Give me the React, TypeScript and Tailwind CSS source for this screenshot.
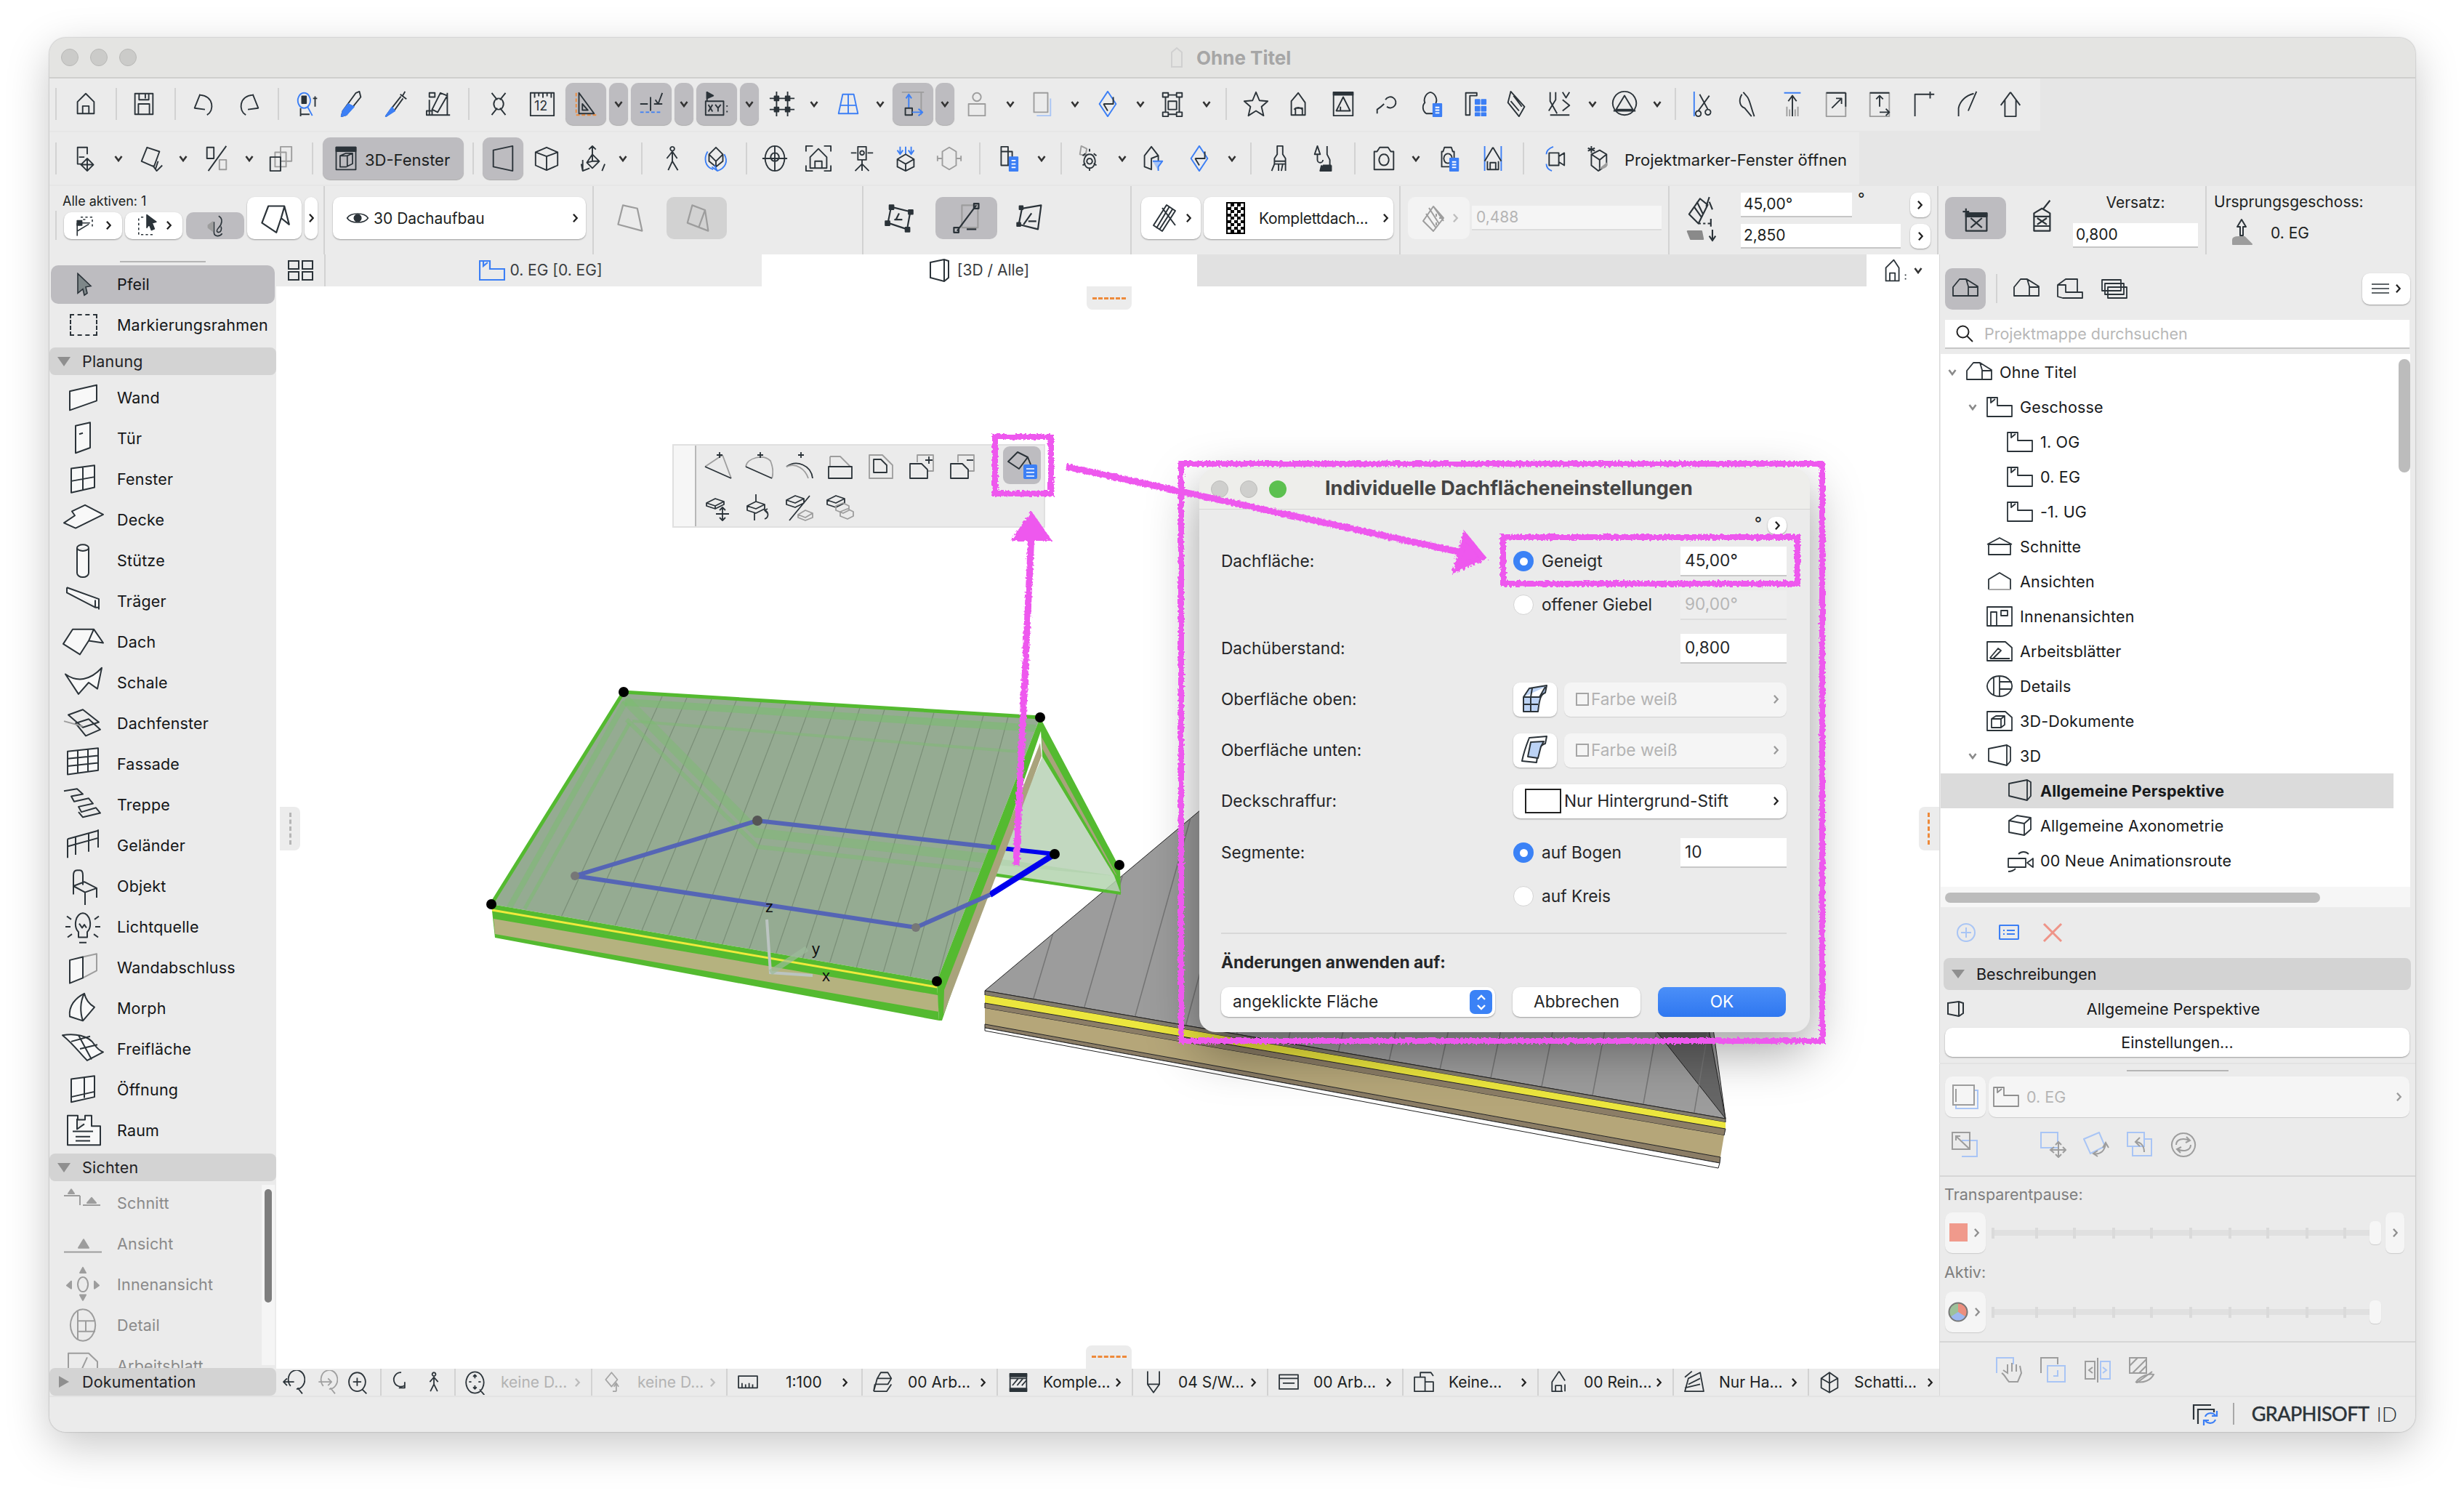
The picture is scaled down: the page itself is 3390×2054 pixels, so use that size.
import React from "react";

const D = "#2b3339";
const B = "#3c7ff5";
const G = "#9d9d9d";
const L = "#a9c5f5";
const O = "#ee8a3a";
const R = "#ef9488";

type Part = { d: string; c: string; f: string };
const s = (d: string, c = D, f = "none"): Part => ({ d, c, f });

const ICONS: Record<string, Part[]> = {
  home: [s("M20 5L8 17V34H32V17ZM15.5 34V23H24.5V34")],
  save: [s("M7 5H33V35H7ZM13 5V14H27V5M12 35V20H28V35M22 6V12")],
  undo: [s("M14 6L6 26L21 28M14 7C34 9 35 30 24 36")],
  redo: [s("M26 6L34 26L19 28M26 7C6 9 5 30 16 36")],
  find: [s("M14 4a9 11 0 1 0 .1 0M19 24L26 37", B), s("M11 9h6v10h-6z", D, D), s("M30 9V24M27 12h6M9 26V38M9 35H22")],
  pick: [s("M31 2L26 4L7 30L5 38L12 36L33 10Z"), s("M15 20L7 30L5 38L12 36L23 24Z", B, B)],
  inject: [s("M34 2L30 9M27 6L36 13M28 9L14 27L6 38M31 12L18 30L6 38"), s("M15 25L6 38L19 30Z", B, B)],
  param: [s("M6 4H14V10H6ZM22 4L32 8L18 32L10 28ZM32 4V36M28 36H36M6 14V36M2 36H32M2 30h8v6H2z")],
  cross: [s("M10 4L18 14M30 4L22 14M10 36L18 26M30 36L22 26M20 12a7 8 0 1 0 .1 0")],
  ruler: [s("M3 4H37V37H3ZM9 4V11M15 4V9M21 4V11M27 4V9M33 4V11")],
  guide: [s("M6 4v5M6 12v5M6 20v5M6 28v5M6 36h5M14 36h5M22 36h5M30 36h5", O), s("M10 4L32 34H10ZM15 20V29H23Z")],
  snap: [s("M4 20H15M19 10V30M24 20H36M26 14L30 20L36 4"), s("M4 32h5M12 32h5M20 32h5M28 32h5", B)],
  xy: [s("M6 2V16"), s("M6 3L15 8L6 12Z", D, D), s("M4 16H30V36H4ZM8 21l6 10M14 21l-6 10M18 21l4 5l4-5M22 26v5M35 22v2M35 30v2")],
  grid: [s("M12 2V38M28 2V38M2 12H38M2 28H38"), s("M9 9h6v6h-6zM25 9h6v6h-6zM9 25h6v6h-6zM25 25h6v6h-6z", D, D)],
  trap: [s("M12 6H28L34 34H6ZM20 6V34M8 22H32", B)],
  wallarrow: [s("M4 3H36M32 3V36", G), s("M14 26V6M10 12L14 6L18 12", B), s("M9 26h10v10H9z"), s("M19 32H34M28 27L34 32L28 37", B)],
  lock: [s("M14 10a6 6 0 1 1 12 0a6 6 0 1 1-12 0M8 20H32V37H8Z", G)],
  boxg: [s("M10 4H30V32H10Z", G), s("M14 37H34V12", L)],
  diam: [s("M20 2L8 20L20 38L32 20Z", B), s("M14 20H28V10M14 20L20 30")],
  group: [s("M6 4H14V10H6ZM26 4H34V10H26ZM6 32H14V38H6ZM26 32H34V38H26ZM10 10V32M30 10V32M14 7H26M14 35H26M14 16H26V28H14Z")],
  star: [s("M20 3L25 15L37 16L28 24L31 37L20 30L9 37L12 24L3 16L15 15Z")],
  fillh: [s("M18 4L8 16V36H28V18L18 4ZM14 36V26H24V36M12 28a8 8 0 0 1 12 0")],
  page: [s("M6 3H34V37H6Z"), s("M6 3H34V7H6Z", D, D), s("M20 10L10 30H30ZM16 30V24")],
  curve: [s("M6 34V28Q12 24 16 20M18 14a8 8 0 1 1 2 10")],
  layerpg: [s("M20 3C12 5 10 14 12 18C8 22 8 30 14 34H24M20 3C28 5 30 14 28 18V20"), s("M24 20h12v18H24z", B, B), s("M27 25h6M27 29h6M27 33h6", "#fff")],
  multi: [s("M8 4H24V8H14V36H8Z"), s("M22 14h6v6h-6zM31 14h6v6h-6zM22 24h6v6h-6zM31 24h6v6h-6zM22 33h6v4h-6zM31 33h6v4h-6z", B, B)],
  tag: [s("M10 2L30 24L22 38L6 18ZM14 8L26 24M10 16L22 30")],
  dim: [s("M6 3V16L16 34M14 3V14L4 30M24 3l5 8 5-8M24 14l10 8-10 8M6 36H34", D)],
  circ: [s("M20 2a17 17 0 1 0 .1 0M20 8L8 28H32ZM4 30H36")],
  scissor: [s("M4 2V38", B), s("M10 30a4 4 0 1 0 .1 0M24 28a4 4 0 1 0 .1 0M12 6L24 28M26 8L10 30")],
  split: [s("M10 6C4 16 8 24 14 26L24 38M12 3L18 10C22 16 22 22 28 38")],
  up: [s("M8 4H32", B), s("M20 38V10M14 16L20 8L26 16"), s("M12 38V24M16 38V28M24 38V28M28 38V24", G)],
  resz: [s("M6 4H34V38H6Z", G), s("M6 4H34M34 4V24M14 26L28 12M20 12H28V20")],
  resz2: [s("M6 4H34V38H6Z", G), s("M6 4H34M20 24V8M15 13L20 8L25 13M20 32H34M29 27L34 32L29 37")],
  corner: [s("M8 38V6H30M8 6H36M30 2V12")],
  arcv: [s("M8 38V26C10 16 18 8 30 5M34 2L22 30M8 34V30")],
  gable: [s("M20 3L6 22M20 3L34 22M12 14V38H28V14")],
  move: [s("M20 14V4H6V28H12M16 18L8 18M20 20V38M14 26L20 20L26 26M14 32L20 38L26 32M11 29H29M14 26L11 29L14 32M26 26L29 29L26 32")],
  rot: [s("M14 4L32 10L24 32L6 24ZM30 24L26 36M22 30L28 38L36 30")],
  mirror: [s("M34 2L8 38"), s("M6 4H16V20H6Z"), s("M24 22H34V36H24Z", G)],
  mult: [s("M20 3H36V24H20Z", G), s("M12 11H28V32H12Z", G), s("M5 18H20V38H5Z")],
  w3d: [s("M5 3H35V37H5Z"), s("M5 3H35V9H5Z", D, D), s("M11 16L20 12H30V28L20 33H11ZM11 16H22V33M22 16L30 12")],
  persp: [s("M6 8L34 2V38L6 32Z M34 2V38")],
  axo: [s("M4 11L20 4L36 11V30L20 37L4 30ZM4 11L20 17L36 11M20 17V37")],
  walkm: [s("M20 2V14M15 7L20 2L25 7M12 26L20 14L30 24L20 34ZM20 14V24L30 24M12 26L20 24M6 38V22M4 28L6 38L16 34M34 38L38 28")],
  walker: [s("M20 3a3 3 0 1 0 .1 0M20 10V24L14 37M20 24L28 37M12 20L20 10L27 20")],
  orbit: [s("M20 4L10 14L20 24L30 14ZM10 14V24L20 32L30 24V14M20 24V32"), s("M8 10C2 20 4 32 16 36M32 14C38 24 34 34 22 38M14 32L22 38L18 30", B)],
  target: [s("M20 2a14 18 0 1 0 .1 0M20 12a6 6 0 1 0 .1 0M2 20H38M20 2V38")],
  frame: [s("M2 10V2H12M28 2H38V10M2 30V38H12M28 38H38V30M20 6L8 18V34H32V18ZM15 34V24H25V34")],
  tripod: [s("M14 3H26V22H14ZM20 9a3 3 0 1 0 .1 0M4 12H12M28 12H36M20 22V28L10 38M20 28L30 38M20 28V38")],
  compress: [s("M12 3V14M28 3V14M20 3V14M8 8L12 14L16 8M24 8L28 14L32 8", B), s("M20 14L8 21V32L20 38L32 32V21ZM8 21L20 28L32 21M20 28V38")],
  gem: [s("M20 4L10 10V30L20 36L30 30V10ZM2 20H10M30 20H38M3 16V24M37 16V24", G)],
  layerbox: [s("M12 3H22V10H28V30H12ZM12 10H22V30"), s("M24 18h12v20H24z", B, B), s("M27 23h6M27 28h6M27 33h6", "#fff")],
  gear: [s("M8 2L16 6L14 16L6 14Z", G), s("M20 14a8 10 0 1 0 .1 0M20 20a4 4 0 1 0 .1 0M14 13L10 16M26 13L30 16M14 27L10 30M26 27L30 30M20 10V6M20 34V38")],
  funnel: [s("M18 3L8 16V32L18 36V20L28 16ZM18 20L28 16L28 30"), s("M20 24H34L28 32V38", B, L)],
  brush: [s("M16 2H24V14L28 20V28H12V20L16 14ZM12 24H28"), s("M12 28L8 38M18 28V38M24 28L22 38M28 28V38")],
  brush2: [s("M10 2L14 14H6ZM10 14V22a4 4 0 0 0 8 0M24 2V14L28 22V30H18M18 30H30"), s("M16 30L14 38H30V30", D, D)],
  cam: [s("M10 10L14 4H26L30 10H34V36H6V10ZM20 14a7 8 0 1 0 .1 0")],
  camlist: [s("M12 10L14 4H24L26 10H28V32H10V10ZM19 13a6 7 0 1 0 .1 0"), s("M22 20h12v18H22z", B, B), s("M25 25h6M25 29h6M25 33h6", "#fff")],
  blueh: [s("M8 2V38M32 2V38", B), s("M20 4L8 24M20 4L32 24M12 24V36H28V24M16 36V26H24V36", D)],
  camrot: [s("M14 12H28V30H14ZM28 17L36 12V30L28 25"), s("M20 3C12 6 10 10 10 14M10 28C10 32 12 36 18 38", B)],
  marker: [s("M12 2V12M7 5L17 9M17 5L7 9M12 14L24 8L34 14V30L22 38L12 30ZM12 14L24 22L34 14M24 22V38"), s("M24 34a8 5 0 0 0 10-4V26", G, G)],
  eye: [s("M2 20C8 10 32 10 38 20C32 30 8 30 2 20Z"), s("M20 14a6 6 0 1 0 .1 0", D, D)],
  sel1: [s("M10 6H14M18 6H22M26 6H30M30 10V14M30 18V22M14 10H18M4 16H26M4 16V38M4 30L24 18", D), s("M4 12h8v8H4z", D, D)],
  sel2: [s("M6 8V12M6 16V20M6 24V28M6 32V36M10 36H14M18 36H22M26 36H30M10 6H14"), s("M20 2L36 14L29 16L33 26L28 28L24 18L20 24Z", D, D)],
  magnet: [s("M26 4C34 8 32 18 26 24C22 28 22 32 26 32C30 32 32 26 30 22"), s("M18 14V32C18 40 28 40 32 34", D), s("M8 20L16 14V30L8 24Z", G, G)],
  roofs: [s("M12 5H32L38 28L28 20L22 38L4 26Z M32 6L28 20", D, "#fff")],
  guide1: [s("M10 4L28 8L34 36L4 28Z", G)],
  guide2: [s("M14 4L30 10L34 36L8 26ZM30 10L22 32", G)],
  edit1: [s("M10 6L34 12L30 34L6 26Z"), s("M8 4h5v5h-5zM32 10h5v5h-5zM28 32h5v5h-5zM3 24h5v5H3zM16 22L20 14M14 22H24", D, D)],
  edit2: [s("M14 4H34V32H14Z", G), s("M32 4L8 36M4 32h6v6H4zM29 2h6v6h-6zM20 34H32")],
  edit3: [s("M10 8L34 4L30 34L6 28ZM12 28l10-14M18 24H28"), s("M7 5h4v4H7zM4 26h4v4H4z", D, D)],
  hatch: [s("M22 2L4 30L16 38L34 10ZM26 4L8 34M30 8L12 36M16 6L34 30")],
  hatch2: [s("M20 4L6 24L20 38L34 20ZM14 6L28 28M20 4L34 24M10 14L24 34", G), s("M28 20h6M24 14v4M24 26v4", G)],
  slope: [s("M18 4L4 24L16 36L28 12ZM14 8L22 24M10 14L20 28", D), s("M30 2L26 14M30 8l4 10", D), s("M2 46H20L22 56H6Z", "#8a8a8a", "#8a8a8a"), s("M16 36h3M22 36h3M28 36h3M32 30V40M30 52L34 58L38 52M34 44V58", D)],
  wallsel: [s("M8 8V36M4 12H12M8 14H34V36H8Z M14 20l14 12M28 20L14 32", D), s("M8 14H34V18H8Z", D, D)],
  wallpen: [s("M14 14L24 8L34 14V36H14ZM26 8L34 -2M14 18H34M14 30H34M18 20L30 28M30 20L18 28")],
  origin: [s("M20 2L14 12H18V24H22V12H26Z"), s("M8 30C8 26 14 26 16 26H24L34 36H8Z", G, G)],
  tabh: [s("M16 4L4 16V36H24V16ZM10 36V24H18V36M34 26v2M34 32v2")],
};

function Ic({ n, w = 40, h = 40, vb, sw = 2, className = "" }: { n: string; w?: number; h?: number; vb?: string; sw?: number; className?: string }) {
  return (
    <svg width={w} height={h} viewBox={vb ?? "0 0 40 40"} fill="none" strokeWidth={sw} strokeLinejoin="round" className={`shrink-0 overflow-visible ${className}`}>
      {(ICONS[n] ?? []).map((p, i) => (
        <path key={i} d={p.d} stroke={p.c} fill={p.f} />
      ))}
    </svg>
  );
}

const ChevD = ({ c = "#333" }: { c?: string }) => (
  <svg width="12" height="10" viewBox="0 0 12 10" fill="none" stroke={c} strokeWidth="2.6"><path d="M1.5 2L6 8L10.5 2" /></svg>
);
const ChevR = ({ c = "#222", h = 14 }: { c?: string; h?: number }) => (
  <svg width={h * 0.62} height={h} viewBox="0 0 9 14" fill="none" stroke={c} strokeWidth="2.4" className="shrink-0"><path d="M2 1.5L7 7L2 12.5" /></svg>
);

const Sep = ({ className = "" }: { className?: string }) => <div className={`w-[2px] h-[44px] bg-[#d2d2d2] shrink-0 ${className}`} />;
const T = ({ n, className = "" }: { n: string; className?: string }) => (
  <div className={`w-[60px] h-[56px] flex items-center justify-center shrink-0 ${className}`}><Ic n={n} w={38} h={38} /></div>
);
const Cv = ({ className = "" }: { className?: string }) => (
  <div className={`w-[26px] h-[56px] flex items-center justify-center shrink-0 ${className}`}><ChevD /></div>
);
const TS = ({ n, className = "" }: { n: string; className?: string }) => (
  <div className={`w-[56px] h-[58px] rounded-[10px] bg-[#bdbcc0] shadow-[0_1px_1px_#aaa] flex items-center justify-center shrink-0 ${className}`}><Ic n={n} w={38} h={38} /></div>
);
const CvS = ({ className = "" }: { className?: string }) => (
  <div className={`w-[26px] h-[58px] rounded-[10px] bg-[#bdbcc0] shadow-[0_1px_1px_#aaa] flex items-center justify-center shrink-0 ${className}`}><ChevD /></div>
);

function Toolbar1() {
  return (
    <div className="h-[72px] w-[2739px] bg-[#ebebeb] flex items-center pl-[8px] pb-[2px]">
      <Sep /><T n="home" className="ml-[10px]" /><Sep className="ml-[11px]" /><T n="save" className="ml-[7px]" /><Sep className="ml-[12px]" />
      <T n="undo" className="ml-[9px]" /><T n="redo" className="ml-[1px]" /><Sep className="ml-[10px]" />
      <T n="find" className="ml-[10px]" /><T n="pick" /><T n="inject" /><T n="param" /><Sep className="ml-[10px]" />
      <T n="cross" className="ml-[10px]" />
      <div className="w-[60px] h-[56px] relative flex items-center justify-center shrink-0">
        <Ic n="ruler" w={38} h={38} />
        <span className="absolute top-[20px] left-[19px] text-[18px] leading-[22px] text-[#2b3339] font-['Inter',sans-serif]">12</span>
      </div>
      <TS n="guide" className="ml-[2px]" /><CvS className="ml-[4px]" />
      <TS n="snap" className="ml-[4px]" /><CvS className="ml-[4px]" />
      <TS n="xy" className="ml-[4px]" /><CvS className="ml-[4px]" />
      <T n="grid" className="ml-[2px]" /><Cv className="ml-[1px]" /><T n="trap" className="ml-[4px]" /><Cv className="ml-[1px]" />
      <TS n="wallarrow" className="ml-[4px]" /><CvS className="ml-[3px]" />
      <T n="lock" className="ml-[1px]" /><Cv className="ml-[3px]" /><T n="boxg" className="ml-[-1px]" /><Cv className="ml-[4px]" /><T n="diam" className="ml-[2px]" /><Cv className="ml-[2px]" />
      <T n="group" className="ml-[1px]" /><Cv className="ml-[4px]" /><Sep className="ml-[13px]" />
      <T n="star" className="ml-[10px]" /><T n="fillh" /><T n="page" /><T n="curve" /><T n="layerpg" /><T n="multi" /><T n="tag" /><T n="dim" className="ml-[-2px]" />
      <Cv className="ml-[2px]" /><T n="circ" className="ml-[1px]" /><Cv className="ml-[2px]" /><Sep className="ml-[11px]" />
      <T n="scissor" className="ml-[10px]" /><T n="split" /><T n="up" /><T n="resz" /><T n="resz2" /><T n="corner" /><T n="arcv" /><T n="gable" />
    </div>
  );
}

function Toolbar2() {
  return (
    <div className="h-[72px] w-[2490px] bg-[#ebebeb] flex items-center pl-[8px] mt-[2px] text-[22px] text-[#1c1f22]">
      <Sep /><T n="move" className="ml-[12px]" /><Cv /><T n="rot" className="ml-[2px]" /><Cv className="ml-[1px]" /><T n="mirror" className="ml-[3px]" /><Cv className="ml-[2px]" />
      <T n="mult" /><Sep className="ml-[13px]" />
      <div className="ml-[13px] w-[194px] h-[58px] rounded-[10px] bg-[#bdbcc0] shadow-[0_1px_1px_#aaa] flex items-center pl-[14px] gap-[8px] shrink-0">
        <Ic n="w3d" w={36} h={38} /><span className="pt-[4px]">3D-Fenster</span>
      </div>
      <Sep className="ml-[12px]" /><TS n="persp" className="ml-[12px]" /><T n="axo" className="ml-[2px]" /><T n="walkm" className="ml-[3px]" /><Cv className="ml-[-1px]" /><Sep className="ml-[12px]" />
      <T n="walker" className="ml-[11px]" /><T n="orbit" /><Sep className="ml-[11px]" />
      <T n="target" className="ml-[8px]" /><T n="frame" /><T n="tripod" /><T n="compress" /><T n="gem" /><Sep className="ml-[11px]" />
      <T n="layerbox" className="ml-[6px]" /><Cv className="ml-[5px]" /><Sep className="ml-[13px]" />
      <T n="gear" className="ml-[8px]" /><Cv className="ml-[2px]" /><T n="funnel" className="ml-[-1px]" /><T n="diam" className="ml-[4px]" /><Cv className="ml-[2px]" /><Sep className="ml-[12px]" />
      <T n="brush" className="ml-[9px]" /><T n="brush2" className="ml-[1px]" /><Sep className="ml-[11px]" />
      <T n="cam" className="ml-[9px]" /><Cv className="ml-[1px]" /><T n="camlist" className="ml-[2px]" /><T n="blueh" className="ml-[1px]" /><Sep className="ml-[11px]" />
      <T n="camrot" className="ml-[10px]" /><T n="marker" /><span className="ml-[8px] pt-[4px] whitespace-nowrap">Projektmarker-Fenster öffnen</span>
    </div>
  );
}

const Pill = ({ className = "", children }: { className?: string; children?: React.ReactNode }) => (
  <div className={`rounded-[10px] bg-white shadow-[0_1px_2px_rgba(0,0,0,.35)] flex items-center shrink-0 ${className}`}>{children}</div>
);
const Field = ({ className = "", children }: { className?: string; children?: React.ReactNode }) => (
  <div className={`h-[34px] bg-white border-b-[2px] border-[#c6c6c6] flex items-center pl-[4px] shrink-0 ${className}`}>{children}</div>
);

function InfoBar() {
  const cell = "h-full border-r-[2px] border-[#d2d2d2] flex items-center shrink-0 pb-[6px]";
  return (
    <div className="h-[94px] mt-[2px] bg-[#ebebeb] flex text-[21px] text-[#1c1f22]">
      <div className={`${cell} w-[379px] relative`}>
        <span className="absolute left-[18px] top-[9px] text-[18px] leading-[24px]">Alle aktiven: 1</span>
        <div className="w-[2px] h-[40px] bg-[#d2d2d2] ml-[8px] mt-[20px]" />
        <Pill className="ml-[10px] mt-[20px] w-[80px] h-[37px] justify-center gap-[10px]"><Ic n="sel1" w={32} h={32} /><ChevR /></Pill>
        <Pill className="ml-[4px] mt-[20px] w-[79px] h-[37px] justify-center gap-[10px]"><Ic n="sel2" w={32} h={32} /><ChevR /></Pill>
        <div className="ml-[5px] mt-[20px] w-[80px] h-[37px] rounded-[10px] bg-[#bdbcc0] flex items-center justify-center shrink-0"><Ic n="magnet" w={32} h={32} /></div>
        <Pill className="ml-[4px] w-[75px] h-[58px] justify-center"><Ic n="roofs" w={44} h={44} /></Pill>
        <Pill className="ml-[4px] w-[18px] h-[58px] justify-center"><ChevR /></Pill>
      </div>
      <div className={`${cell} w-[370px]`}>
        <Pill className="ml-[11px] w-[348px] h-[58px] pl-[18px] pr-[10px]">
          <Ic n="eye" w={32} h={32} />
          <span className="ml-[6px] pt-[2px]">30 Dachaufbau</span>
          <span className="ml-auto"><ChevR /></span>
        </Pill>
      </div>
      <div className={`${cell} w-[371px]`}>
        <Ic n="guide1" w={44} h={44} className="ml-[29px]" />
        <div className="ml-[27px] w-[83px] h-[58px] rounded-[10px] bg-[#d2d2d2] flex items-center justify-center"><Ic n="guide2" w={44} h={44} /></div>
      </div>
      <div className={`${cell} w-[369px]`}>
        <Ic n="edit1" w={44} h={44} className="ml-[27px]" />
        <div className="ml-[28px] w-[85px] h-[58px] rounded-[10px] bg-[#bdbcc0] flex items-center justify-center"><Ic n="edit2" w={44} h={44} /></div>
        <Ic n="edit3" w={44} h={44} className="ml-[23px]" />
      </div>
      <div className={`${cell} w-[370px]`}>
        <Pill className="ml-[13px] w-[82px] h-[58px] justify-center gap-[8px]"><Ic n="hatch" w={40} h={44} /><ChevR /></Pill>
        <Pill className="ml-[4px] w-[261px] h-[58px] pl-[31px] pr-[6px]">
          <div className="w-[26px] h-[44px] bg-[repeating-conic-gradient(#000_0_25%,#fff_0_50%)] bg-[length:9px_9px] border-[2px] border-black shrink-0" />
          <span className="ml-[19px] pt-[2px] whitespace-nowrap tracking-[-0.3px]">Komplettdach...</span>
          <span className="ml-auto"><ChevR /></span>
        </Pill>
      </div>
      <div className={`${cell} w-[370px]`}>
        <div className="ml-[10px] w-[85px] h-[58px] rounded-[10px] bg-[#f3f3f3] flex items-center justify-center gap-[6px] shrink-0"><Ic n="hatch2" w={40} h={44} /><ChevR c="#bdbdbd" /></div>
        <div className="ml-[3px] w-[261px] h-[34px] bg-[#f5f5f5] border-b-[2px] border-[#dcdcdc] pl-[6px] text-[#b5b5b5] flex items-center">0,488</div>
      </div>
      <div className={`${cell} w-[370px] relative`}>
        <Ic n="slope" w={52} h={62} vb="0 0 40 58" className="ml-[18px]" />
        <div className="flex flex-col gap-[9px] ml-[28px] pt-[6px]">
          <div className="flex items-center"><Field className="w-[153px]">45,00°</Field><span className="ml-[8px] mt-[-16px]">°</span>
            <Pill className="ml-[62px] w-[28px] h-[34px] justify-center"><ChevR /></Pill></div>
          <div className="flex items-center"><Field className="w-[220px]">2,850</Field><Pill className="ml-[13px] w-[28px] h-[34px] justify-center"><ChevR /></Pill></div>
        </div>
      </div>
      <div className={`${cell} w-[369px]`}>
        <div className="ml-[9px] w-[84px] h-[58px] rounded-[10px] bg-[#bdbcc0] flex items-center justify-center shrink-0"><Ic n="wallsel" w={44} h={44} /></div>
        <Ic n="wallpen" w={44} h={50} className="ml-[23px]" />
        <div className="flex flex-col ml-[25px] w-[172px] items-center gap-[12px] pt-[4px]">
          <span>Versatz:</span>
          <Field className="w-[172px]">0,800</Field>
        </div>
      </div>
      <div className="flex-1 pl-[10px] pt-[10px]">
        <div className="leading-[24px]">Ursprungsgeschoss:</div>
        <div className="flex items-center mt-[10px]"><Ic n="origin" w={40} h={40} className="ml-[18px]" /><span className="ml-[20px] pt-[2px]">0. EG</span></div>
      </div>
    </div>
  );
}

const LEFT: Record<string, Part[]> = {
  Wand: [s("M12 12L49 6V21L12 30Z", D, "#f8f8f8")],
  Tür: [s("M20 6L40 3V27L20 32Z M25 14l5-1", D, "#f8f8f8")],
  Fenster: [s("M14 8L46 5V26L14 31ZM30 6V29M14 20L46 16", D, "#f8f8f8")],
  Decke: [s("M4 21L19 14L15 10L33 4L58 13L20 26Z", D, "#f8f8f8")],
  Stütze: [s("M22 6V30a8 4 0 0 0 16 0V6M22 6a8 3 0 0 1 16 0a8 3 0 0 1-16 0", D, "#f8f8f8")],
  Träger: [s("M8 5L52 16V26M8 5V10L47 24H52M47 17V24", D, "#f8f8f8")],
  Dach: [s("M3 20L16 6H45L58 19L38 17L26 30Z M45 6L38 17", D, "#f8f8f8")],
  Schale: [s("M6 10C22 18 40 16 56 4L50 24L38 18L24 29Z M24 29L6 10", D, "#f8f8f8")],
  Dachfenster: [s("M10 10L30 5L52 17L30 22ZM20 18L38 14L54 24L34 30Z"), s("M4 16L30 21", G)],
  Fassade: [s("M9 6L51 3V24L9 28ZM9 13L51 10M9 20L51 17M23 5V27M37 4V25", D, "#f8f8f8")],
  Treppe: [s("M4 5L22 3L30 8L14 10L18 15L38 12L44 17L24 20L28 25L48 21L54 26L30 30L24 25")],
  Geländer: [s("M9 12L51 4M9 19L51 11M9 12V30M20 10V27M38 7V24M51 3V20")],
  Objekt: [s("M17 26V8Q17 3 22 3H26Q30 3 30 8V17M17 18L32 14L49 20L33 24ZM17 18V26M33 24V36M49 20V29")],
  Lichtquelle: [s("M30 5a10 10 0 0 1 6 18v5h-12v-5a10 10 0 0 1 6-18ZM25 33h10M8 8l6 3M52 8l-6 3M6 18h7M54 18h-7M9 28l6-3M51 28l-6-3M25 15l4 4 3-3 3 3")],
  Wandabschluss: [s("M30 8L49 5V21L30 28", G), s("M12 11L30 8V28L12 33Z", D, "#f8f8f8")],
  Morph: [s("M12 26C10 16 20 8 32 4C34 10 38 14 46 17L30 30ZM30 30C26 22 26 12 32 4", D, "#f8f8f8")],
  Freifläche: [s("M2 5C18 3 38 5 46 14C50 18 54 20 58 21L36 29C28 24 18 14 2 5ZM14 11L40 6M26 18L50 14M24 5L42 28", D, "#f8f8f8")],
  Öffnung: [s("M14 8L46 5V25L14 30ZM32 6V26M14 25L46 20", D, "#f8f8f8")],
  Raum: [s("M9 4H23V8H33V4H42V14H54V32H9ZM22 7V17L32 12M20 24H40M20 28H40M16 19H44", D, "#f8f8f8")],
  Schnitt: [s("M4 11H26M26 11V20M30 20H54", G), s("M10 9L14 5L18 9ZM36 18L42 13L48 18Z", G, G)],
  Ansicht: [s("M4 26H56", G), s("M24 22L31 14L38 22Z", G, G)],
  Innenansicht: [s("M30 11a7 7 0 1 0 .1 0", G), s("M26 7L30 2L34 7ZM26 28L30 33L34 28ZM14 15L8 19L14 22ZM46 15L52 19L46 22Z", G, G)],
  Detail: [s("M30 3a17 15 0 1 0 .1 0M23 5V32M23 14H47M23 24H47M34 14V24", G)],
  Arbeitsblatt: [s("M10 22V6H38L50 14V22M28 22L36 10", G)],
};

const ToolRow = ({ label, gray }: { label: string; gray?: boolean }) => (
  <div className={`h-[56px] flex items-center shrink-0 ${gray ? "text-[#8a8a8a]" : "text-[#141618]"}`}>
    <svg width="60" height="52" viewBox="0 0 60 36" preserveAspectRatio="none" fill="none" strokeLinejoin="round" className="ml-[16px] shrink-0 overflow-visible">
      {(LEFT[label] ?? []).map((p, i) => <path key={i} d={p.d} stroke={p.c} fill={p.f} strokeWidth="2" vectorEffect="non-scaling-stroke" />)}
    </svg>
    <span className="ml-[17px] whitespace-nowrap">{label}</span>
  </div>
);

const GroupHead = ({ label, open = true, className = "" }: { label: string; open?: boolean; className?: string }) => (
  <div className={`h-[38px] rounded-[8px] bg-[#d3d3d3] flex items-center shrink-0 text-[#1f2225] ${className}`}>
    {open ? <div className="ml-[11px] w-0 h-0 border-x-[9px] border-x-transparent border-t-[13px] border-t-[#8f8f8f]" /> : <div className="ml-[13px] w-0 h-0 border-y-[8px] border-y-transparent border-l-[14px] border-l-[#8f8f8f]" />}
    <span className={open ? "ml-[16px]" : "ml-[18px]"}>{label}</span>
  </div>
);

function LeftPanel() {
  const up = ["Wand", "Tür", "Fenster", "Decke", "Stütze", "Träger", "Dach", "Schale", "Dachfenster", "Fassade", "Treppe", "Geländer"];
  const lo = ["Objekt", "Lichtquelle", "Wandabschluss", "Morph", "Freifläche", "Öffnung", "Raum"];
  return (
    <div className="w-[312px] shrink-0 flex flex-col bg-[#ebebeb] text-[21.5px] tracking-[0.2px]">
      <div className="h-[15px] flex items-start justify-center pt-[9px] shrink-0"><div className="w-[118px] h-[2px] bg-[#b5b5b5]" /></div>
      <div className="mx-[2px] h-[53px] rounded-[10px] bg-[#bdbcc0] flex items-center shrink-0">
        <svg width="24" height="34" viewBox="0 0 24 24" preserveAspectRatio="none" className="ml-[34px]" fill="#7e8789" stroke={D} strokeWidth="1.6"><path d="M3 1L21 13L14 14L16 20L12 22L10 16L3 20Z" vectorEffect="non-scaling-stroke" /></svg>
        <span className="ml-[33px] text-[#141618]">Pfeil</span>
      </div>
      <div className="h-[58px] flex items-center shrink-0">
        <div className="ml-[28px] w-[38px] h-[30px] border-[2px] border-dashed border-[#2b3339] shrink-0" />
        <span className="ml-[27px] whitespace-nowrap text-[#141618]">Markierungsrahmen</span>
      </div>
      <GroupHead label="Planung" className="mt-[2px]" />
      <div className="h-[3px] shrink-0" />
      {up.map((l) => <ToolRow key={l} label={l} />)}
      {lo.map((l) => <ToolRow key={l} label={l} />)}
      <GroupHead label="Sichten" className="mt-[4px]" />
      <div className="relative h-[257px] overflow-hidden shrink-0 pt-[2px]">
        {["Schnitt", "Ansicht", "Innenansicht", "Detail", "Arbeitsblatt"].map((l) => <ToolRow key={l} label={l} gray />)}
        <div className="absolute right-[2px] top-[5px] bottom-[4px] w-[18px] bg-[#f5f5f5]">
          <div className="mx-[4px] mt-[6px] h-[156px] rounded-full bg-[#7e7e7e]" />
        </div>
      </div>
      <GroupHead label="Dokumentation" open={false} />
    </div>
  );
}

const TREE: { l: number; chev?: boolean; ic: string; t: string; sel?: boolean }[] = [
  { l: 0, chev: true, ic: "proj", t: "Ohne Titel" },
  { l: 1, chev: true, ic: "floor", t: "Geschosse" },
  { l: 2, ic: "floor", t: "1. OG" },
  { l: 2, ic: "floor", t: "0. EG" },
  { l: 2, ic: "floor", t: "-1. UG" },
  { l: 1, ic: "schn", t: "Schnitte" },
  { l: 1, ic: "ans", t: "Ansichten" },
  { l: 1, ic: "inn", t: "Innenansichten" },
  { l: 1, ic: "arb", t: "Arbeitsblätter" },
  { l: 1, ic: "det", t: "Details" },
  { l: 1, ic: "dok", t: "3D-Dokumente" },
  { l: 1, chev: true, ic: "p3d", t: "3D" },
  { l: 2, ic: "p3d", t: "Allgemeine Perspektive", sel: true },
  { l: 2, ic: "axo", t: "Allgemeine Axonometrie" },
  { l: 2, ic: "camr", t: "00 Neue Animationsroute" },
];

const TR: Record<string, Part[]> = {
  proj: [s("M1 25V13L10 2H19L35 12V25ZM19 2L22 12V25M22 13H35")],
  floor: [s("M1 2H15V13H35V28H1ZM6 2V9L12 4")],
  schn: [s("M3 12H33V26H3ZM1 12L18 3L35 12")],
  ans: [s("M3 26V12L18 3L33 12V26"), s("M3 26H33", G)],
  inn: [s("M1 2H35V28H1ZM6 9H14V28H6ZM20 7H29V14H20Z")],
  arb: [s("M1 2H26L35 10V28H1ZM5 24L16 11L20 14L9 25ZM5 25H32")],
  det: [s("M18 1a17 14 0 1 0 .1 0M10 2V28M18 2V28M18 9H35M18 19H35")],
  dok: [s("M1 2H26L35 10V28H1ZM7 12H20V24H7ZM7 12L13 8H25V20L20 24M20 12L25 8")],
  p3d: [s("M3 5L28 0L33 3V22L28 28L3 22ZM28 0V28")],
  axo: [s("M3 8L14 1L33 4V20L24 28L3 24ZM3 8L24 12L33 4M24 12V28")],
  camr: [s("M2 12H26V24H2ZM28 18L36 12V24ZM16 6C20 2 26 2 30 6M2 30C6 30 10 28 12 26")],
  slab: [s("M1 10L12 2H28V20H35V28H8L1 26ZM28 20H12V10L1 10")],
  stack: [s("M2 3H28V18H2ZM6 8H32V23H6ZM10 13H36V28H10Z")],
};

function TreeIc({ n, c }: { n: string; c?: string }) {
  return (
    <svg width="36" height="30" viewBox="0 0 36 30" fill="none" strokeWidth="1.8" strokeLinejoin="round" className="shrink-0 overflow-visible">
      {TR[n].map((p, i) => <path key={i} d={p.d} stroke={c ?? p.c} />)}
    </svg>
  );
}

function SliderRow({ color, right }: { color: React.ReactNode; right?: boolean }) {
  return (
    <div className="h-[57px] flex items-center pl-[8px] pr-[7px] shrink-0">
      <div className="w-[56px] h-[56px] rounded-[10px] bg-[#f5f5f5] shadow-[0_1px_1px_#ccc] flex items-center gap-[8px] shrink-0">
        {color}<ChevR c="#8f8f8f" />
      </div>
      <div className="relative ml-[8px] w-[536px] h-[32px] flex items-center">
        <div className="w-[528px] h-[8px] bg-[#e0e0e0]" />
        {[0, 60, 112, 166, 218, 272, 326, 378, 432, 484].map((x) => (
          <div key={x} className="absolute top-[9px] w-[4px] h-[15px] bg-[#dadada]" style={{ left: x }} />
        ))}
        <div className="absolute right-0 w-[16px] h-[32px] rounded-[6px] bg-[#f6f6f6] shadow-[0_1px_1px_#ccc]" />
      </div>
      {right && <div className="ml-[6px] w-[26px] h-[56px] rounded-[8px] bg-[#f5f5f5] shadow-[0_1px_1px_#ccc] flex items-center justify-center"><ChevR c="#8f8f8f" /></div>}
    </div>
  );
}

function RightPanel() {
  return (
    <div className="w-[655px] shrink-0 bg-[#ebebeb] text-[21.5px] text-[#17191b] flex flex-col shadow-[inset_1px_0_0_#d8d8d8]">
      <div className="h-[90px] flex items-center pl-[8px] pr-[7px] pt-[4px] shrink-0">
        <div className="w-[56px] h-[57px] rounded-[10px] bg-[#bdbcc0] flex items-center justify-center"><TreeIc n="proj" /></div>
        <div className="w-[2px] h-[40px] bg-[#d2d2d2] ml-[14px]" />
        <span className="ml-[22px]"><TreeIc n="proj" /></span>
        <span className="ml-[24px]"><TreeIc n="slab" /></span>
        <span className="ml-[24px]"><TreeIc n="stack" /></span>
        <Pill className="ml-auto w-[66px] h-[43px] justify-center gap-[8px]">
          <svg width="24" height="14" viewBox="0 0 24 14" stroke={D} strokeWidth="1.5"><path d="M0 1H24M0 7H24M0 13H24" /></svg>
          <ChevR />
        </Pill>
      </div>
      <div className="mx-[8px] h-[40px] bg-white border-b-[2px] border-[#c6c6c6] flex items-center shrink-0">
        <svg width="26" height="26" viewBox="0 0 26 26" fill="none" stroke="#222" strokeWidth="2" className="ml-[14px]"><circle cx="10.5" cy="10.5" r="8" /><path d="M16.5 16.5L24 24" /></svg>
        <span className="ml-[14px] text-[#b8b8b8]">Projektmappe durchsuchen</span>
      </div>
      <div className="relative h-[761px] mt-[7px] ml-[2px] mr-[7px] bg-white overflow-hidden shrink-0">
        <div className="absolute left-0 top-0 w-[623px] h-[733px] overflow-hidden">
          {TREE.map((r) => (
            <div key={r.t + r.l} className={`h-[48px] flex items-center ${r.sel ? "bg-[#dbdbdb] font-bold" : ""} ${r.l === 0 ? "pl-[10px]" : r.l === 1 ? "pl-[38px]" : "pl-[66px]"} mt-0 first:mt-[1px]`}>
              <div className="w-[24px] shrink-0 flex items-center">{r.chev && <ChevD c="#8a8a8a" />}</div>
              <span className="w-[36px] shrink-0 flex justify-center ml-[1px]"><TreeIc n={r.ic} /></span>
              <span className="ml-[10px] whitespace-nowrap tracking-[0.2px]">{r.t}</span>
            </div>
          ))}
        </div>
        <div className="absolute left-[630px] top-[7px] w-[16px] h-[156px] rounded-full bg-[#bcbcbc]" />
        <div className="absolute left-0 right-0 bottom-0 h-[28px] bg-[#f6f6f6]">
          <div className="ml-[6px] mt-[8px] w-[516px] h-[14px] rounded-full bg-[#bcbcbc]" />
        </div>
      </div>
      <div className="h-[70px] flex items-center shrink-0 pl-[23px]">
        <svg width="28" height="28" viewBox="0 0 28 28" fill="none" stroke={L} strokeWidth="2"><circle cx="14" cy="14" r="12" /><path d="M14 7V21M7 14H21" /></svg>
        <svg width="28" height="22" viewBox="0 0 28 22" fill="none" stroke={B} strokeWidth="2.2" className="ml-[31px]"><rect x="1" y="1" width="26" height="19" rx="1" /><path d="M6 8H8M11 8H22M6 13H8M11 13H22" /></svg>
        <svg width="28" height="28" viewBox="0 0 28 28" fill="none" stroke={R} strokeWidth="3" className="ml-[32px]"><path d="M2 2L26 26M26 2L2 26" /></svg>
      </div>
      <div className="mx-[6px] h-[44px] rounded-[8px] bg-[#d3d3d3] flex items-center shrink-0">
        <div className="ml-[11px] w-0 h-0 border-x-[9px] border-x-transparent border-t-[12px] border-t-[#8f8f8f]" />
        <span className="ml-[16px]">Beschreibungen</span>
      </div>
      <div className="h-[52px] flex items-center pl-[11px] shrink-0 relative">
        <svg width="24" height="22" viewBox="0 0 24 22" fill="none" stroke={D} strokeWidth="2"><path d="M1 3L16 1L22 3V17L16 21L1 18ZM16 1V21" /></svg>
        <span className="absolute left-[200px] w-[244px] text-center whitespace-nowrap">Allgemeine Perspektive</span>
      </div>
      <Pill className="mx-[8px] h-[40px] justify-center">Einstellungen...</Pill>
      <div className="mt-[8px] h-[2px] bg-[#e3e3e3] shrink-0" />
      <div className="h-[17px] flex justify-center items-center shrink-0"><div className="w-[140px] h-[2px] bg-[#b5b5b5]" /></div>
      <div className="flex px-[8px] gap-[4px] shrink-0 h-[56px]">
        <div className="w-[56px] rounded-[10px] bg-[#f5f5f5] shadow-[0_1px_1px_#ccc] flex items-center justify-center">
          <svg width="36" height="34" viewBox="0 0 36 34" fill="none" strokeWidth="2"><path d="M5 8V33H35V8Z" stroke={L} /><path d="M1 1H30V28H1ZM5 6V24" stroke={G} fill="#f5f5f5" /></svg>
        </div>
        <div className="flex-1 rounded-[10px] bg-[#f5f5f5] shadow-[0_1px_1px_#ccc] flex items-center pl-[6px] pr-[10px] text-[#b5b5b5]">
          <TreeIc n="floor" c="#8f8f8f" /><span className="ml-[10px]">0. EG</span><span className="ml-auto"><ChevR c="#9a9a9a" /></span>
        </div>
      </div>
      <div className="h-[80px] pb-[5px] flex items-center shrink-0 pl-[17px]">
        <svg width="36" height="36" viewBox="0 0 36 36" fill="none" strokeWidth="2"><path d="M14 12H35V34H14" stroke={L} /><path d="M1 1H25V24H1ZM6 6L25 24M6 12V6H12M25 18V24H19" stroke={G} /></svg>
        <svg width="36" height="36" viewBox="0 0 36 36" fill="none" strokeWidth="2" className="ml-[86px]"><path d="M24 22H1V1H24V14" stroke={L} /><path d="M25 14V35M14 25H35M21 18L25 14L29 18M21 31L25 35L29 31M19 21L14 25L19 29M31 21L35 25L31 29" stroke={G} /></svg>
        <svg width="36" height="36" viewBox="0 0 36 36" fill="none" strokeWidth="2" className="ml-[23px]"><path d="M1 10L22 1L30 20L10 30Z" stroke={L} /><path d="M14 30C24 32 30 26 31 16M27 22L31 15L35 22M20 26L14 30L20 34" stroke={G} /></svg>
        <svg width="36" height="36" viewBox="0 0 36 36" fill="none" strokeWidth="2" className="ml-[24px]"><path d="M1 1H24V20H1ZM8 20V33H34V10H24" stroke={L} /><path d="M24 28C24 20 20 14 12 14M18 8L12 14L18 20" stroke={G} /></svg>
        <svg width="36" height="36" viewBox="0 0 36 36" fill="none" strokeWidth="2" className="ml-[24px]"><path d="M18 2a16 16 0 1 0 .1 0M8 18C8 10 18 8 26 12M22 7L27 12L21 15M28 18C28 26 18 28 10 24M14 29L9 24L15 21" stroke={G} /></svg>
      </div>
      <div className="h-[2px] bg-[#d6d6d6] shrink-0" />
      <div className="h-[48px] pl-[7px] flex items-center text-[#7e7e7e] shrink-0">Transparentpause:</div>
      <SliderRow color={<div className="w-[25px] h-[25px] bg-[#f09a8c] ml-[6px]" />} right />
      <div className="h-[52px] pl-[7px] flex items-center text-[#7e7e7e] shrink-0">Aktiv:</div>
      <SliderRow color={
        <svg width="28" height="28" viewBox="0 0 28 28" className="ml-[4px]"><circle cx="14" cy="14" r="13" fill="#9dc19a" /><path d="M14 14V1A13 13 0 0 1 25 21Z" fill="#ec8f7f" /><path d="M14 14L25 21A13 13 0 0 1 3 21Z" fill="#9db8f0" /><circle cx="14" cy="14" r="12.5" fill="none" stroke="#777" strokeWidth="2" /></svg>
      } />
      <div className="mt-[12px] h-[2px] bg-[#d6d6d6] shrink-0" />
      <div className="h-[75px] flex items-center shrink-0 pl-[78px] gap-[25px]">
        <svg width="36" height="36" viewBox="0 0 36 36" fill="none" strokeWidth="2"><path d="M1 22V1H24V10" stroke={L} /><path d="M8 22C12 24 14 30 18 34H30L35 22L33 12M28 10V20M22 8V20M16 10V22L10 18" stroke={G} /></svg>
        <svg width="36" height="36" viewBox="0 0 36 36" fill="none" strokeWidth="2"><path d="M1 22V1H24V10" stroke={G} /><path d="M10 12H34V34H10ZM24 18V26H18" stroke={L} /></svg>
        <svg width="36" height="36" viewBox="0 0 36 36" fill="none" strokeWidth="2"><path d="M1 6H14V30H1ZM11 14L6 18L11 22" stroke={G} /><path d="M18 1V35" stroke={G} /><path d="M22 6H35V30H22ZM25 14L30 18L25 22" stroke={L} /></svg>
        <svg width="36" height="36" viewBox="0 0 36 36" fill="none" strokeWidth="2" stroke={G}><path d="M1 1H24V22H1ZM1 12L12 1M5 22L24 3M14 22L24 12M10 34C16 26 28 22 34 24C30 32 20 36 10 34ZM10 36L32 20" /></svg>
      </div>
    </div>
  );
}

const Radio = ({ on }: { on?: boolean }) =>
  on ? (
    <div className="w-[28px] h-[28px] rounded-full bg-[#3b82f6] flex items-center justify-center shrink-0"><div className="w-[11px] h-[11px] rounded-full bg-white" /></div>
  ) : (
    <div className="w-[28px] h-[28px] rounded-full bg-white border border-[#d4d4d4] shrink-0" />
  );

const DInput = ({ children, off }: { children: React.ReactNode; off?: boolean }) => (
  <div className={`ml-auto w-[146px] h-[41px] border-b-[2px] flex items-center pl-[6px] ${off ? "bg-[#eeeeee] border-[#dedede] text-[#b6b6b6]" : "bg-white border-[#c8c8c8]"}`}>{children}</div>
);

function Surface({ top }: { top?: boolean }) {
  return (
    <div className="flex items-center gap-[10px]">
      <div className="w-[60px] h-[47px] rounded-[9px] bg-white shadow-[0_1px_2px_rgba(0,0,0,.3)] flex items-center justify-center">
        <svg width="40" height="42" viewBox="0 0 40 42" stroke={D} strokeWidth="2" fill={top ? "#bcd3f5" : "none"} strokeLinejoin="round">
          {top ? <path d="M4 18L12 6L36 2L34 12C28 14 26 20 24 38L4 38ZM4 18H26L34 4M4 28H24M14 18V38M16 6L14 18" /> : <><path d="M12 4L36 2L34 12C26 14 24 22 22 38L2 36C4 26 8 14 12 4Z" /><path d="M14 10L32 9L28 16L24 32L10 30Z" fill="#bcd3f5" /></>}
        </svg>
      </div>
      <div className="w-[306px] h-[47px] rounded-[9px] bg-[#f5f5f5] shadow-[0_1px_1px_#d0d0d0] flex items-center pl-[16px] pr-[10px] text-[#b3b3b3]">
        <div className="w-[18px] h-[18px] border-[2px] border-[#a5a5a5] shrink-0" />
        <span className="ml-[3px]">Farbe weiß</span>
        <span className="ml-auto"><ChevR c="#9a9a9a" /></span>
      </div>
    </div>
  );
}

function Dialog() {
  const lab = "w-[402px] shrink-0";
  return (
    <div className="absolute left-[1270px] top-[251px] w-[840px] h-[775px] rounded-[22px] bg-[#ebebeb] shadow-[0_24px_70px_rgba(0,0,0,.38)] overflow-hidden text-[22.7px] text-[#242628] font-['Inter',sans-serif] z-10">
      <div className="h-[56px] bg-[#eeeeeb] border-b border-[#d6d6d4] flex items-center">
        <div className="ml-[16px] w-[24px] h-[24px] rounded-full bg-[#cfcfcd] border border-[#bcbcba]" />
        <div className="ml-[16px] w-[24px] h-[24px] rounded-full bg-[#cfcfcd] border border-[#bcbcba]" />
        <div className="ml-[16px] w-[24px] h-[24px] rounded-full bg-[#5cc04f]" />
        <span className="ml-[53px] text-[27px] font-bold text-[#444] whitespace-nowrap">Individuelle Dachflächeneinstellungen</span>
      </div>
      <div className="pl-[30px] pr-[32px] flex flex-col">
        <div className="h-[24px] mt-[10px] flex justify-end items-center">
          <span className="mr-[8px] mt-[-6px]">°</span>
          <Pill className="w-[26px] h-[24px] justify-center"><ChevR /></Pill>
        </div>
        <div className="h-[60px] mt-[7px] flex items-center"><span className={lab}>Dachfläche:</span><Radio on /><span className="ml-[11px]">Geneigt</span><DInput>45,00°</DInput></div>
        <div className="h-[60px] flex items-center"><span className={lab}></span><Radio /><span className="ml-[11px]">offener Giebel</span><DInput off>90,00°</DInput></div>
        <div className="h-[60px] flex items-center"><span className={lab}>Dachüberstand:</span><DInput>0,800</DInput></div>
        <div className="h-[70px] mt-[5px] flex items-center"><span className={lab}>Oberfläche oben:</span><Surface top /></div>
        <div className="h-[70px] flex items-center"><span className={lab}>Oberfläche unten:</span><Surface /></div>
        <div className="h-[70px] flex items-center"><span className={lab}>Deckschraffur:</span>
          <Pill className="w-[376px] h-[47px] pl-[16px] pr-[10px]">
            <div className="w-[50px] h-[34px] border-[2px] border-[#222] shrink-0" />
            <span className="ml-[4px] whitespace-nowrap">Nur Hintergrund-Stift</span>
            <span className="ml-auto"><ChevR /></span>
          </Pill>
        </div>
        <div className="h-[60px] mt-[6px] flex items-center"><span className={lab}>Segmente:</span><Radio on /><span className="ml-[11px]">auf Bogen</span><DInput>10</DInput></div>
        <div className="h-[60px] flex items-center"><span className={lab}></span><Radio /><span className="ml-[11px]">auf Kreis</span></div>
        <div className="h-[2px] mt-[20px] bg-[#d8d8d8]" />
        <div className="mt-[25px] h-[28px] leading-[28px] font-bold">Änderungen anwenden auf:</div>
        <div className="mt-[20px] flex items-center">
          <Pill className="w-[377px] h-[41px] pl-[16px] pr-[4px]">
            <span>angeklickte Fläche</span>
            <div className="ml-auto w-[31px] h-[33px] rounded-[7px] bg-[#3b82f6] flex items-center justify-center">
              <svg width="16" height="24" viewBox="0 0 16 24" fill="none" stroke="#fff" strokeWidth="2.4"><path d="M3 8L8 3L13 8M3 16L8 21L13 16" /></svg>
            </div>
          </Pill>
          <Pill className="ml-[24px] w-[176px] h-[41px] justify-center">Abbrechen</Pill>
          <div className="ml-[24px] w-[176px] h-[41px] rounded-[10px] bg-[linear-gradient(#4b8ff8,#2f77f0)] text-white flex items-center justify-center">OK</div>
        </div>
      </div>
    </div>
  );
}

function Palette() {
  const row1 = ["pa", "pb", "pc", "pd", "pe", "pf", "pg"];
  const row2 = ["qa", "qb", "qc", "qd"];
  const P: Record<string, Part[]> = {
    pa: [s("M2 20L26 4", G), s("M26 4L38 36", G), s("M2 20L38 36"), s("M22 0V8M18 4H26")],
    pb: [s("M2 20C4 8 26 2 36 12C40 22 40 30 38 36", G), s("M2 20L38 36"), s("M22 0V8M18 4H26")],
    pc: [s("M2 20C16 10 36 18 38 36", D), s("M2 20C16 14 28 24 32 36", G), s("M22 0V8M18 4H26")],
    pd: [s("M6 6H20L34 20", G), s("M6 6V20", G), s("M4 20H36V36H4Z")],
    pe: [s("M4 4H22L36 18V36H4Z", G), s("M10 10H20L28 18V28H10Z")],
    pf: [s("M14 14V4H36V26H28", G), s("M4 16H20L28 24V36H4Z"), s("M30 6V16M25 11H35")],
    pg: [s("M14 14V4H36V26H28", G), s("M4 16H20L28 24V36H4Z"), s("M26 11H35")],
    qa: [s("M4 14L16 8L28 12V16L16 22L4 18ZM4 14L16 18L28 12M16 18V22M26 20V38M17 29H35M22 24L26 20L30 24M22 34L26 38L30 34")],
    qb: [s("M4 18L16 12L28 16V22L16 28L4 24ZM4 18L16 22L28 16M16 2V12M14 28V38M28 24C34 26 34 34 28 36M32 22L28 24L32 28")],
    qc: [s("M2 10L14 4L26 8V14L14 20L2 16ZM2 10L14 14L26 8M34 4L6 38"), s("M18 30L28 24L38 28V34L28 38L18 34ZM18 30L28 34L38 28", G)],
    qd: [s("M2 10L14 4L26 8V14L14 20L2 16ZM2 10L14 14L26 8"), s("M14 18L24 14L32 18V24L24 28L14 24ZM20 26L30 22L38 26V32L30 36L20 32Z", G)],
  };
  const Cell = ({ n }: { n: string }) => (
    <svg width="40" height="40" viewBox="0 0 40 40" fill="none" strokeWidth="1.8" strokeLinejoin="round" className="shrink-0">
      {P[n].map((p, i) => <path key={i} d={p.d} stroke={p.c} />)}
    </svg>
  );
  return (
    <div className="absolute left-[545px] top-[217px] w-[513px] h-[115px] bg-[#ebebeb] border-[2px] border-[#e0e0e0] flex z-[1]">
      <div className="w-[31px] bg-[#f6f6f6] border-r-[2px] border-[#b8b8b8]" />
      <div className="relative flex-1 pl-[10px]">
        <div className="flex gap-[16px] mt-[9px]">{row1.map((n) => <Cell key={n} n={n} />)}</div>
        <div className="flex gap-[16px] mt-[16px]">{row2.map((n) => <Cell key={n} n={n} />)}</div>
        <div className="absolute left-[422px] top-[1px] w-[52px] h-[52px] rounded-[9px] bg-[#bdbcc0] flex items-center justify-center">
          <svg width="44" height="42" viewBox="0 0 44 42" fill="none" strokeWidth="2" strokeLinejoin="round"><path d="M3 16L16 3L30 10L18 26Z M30 10L34 20" stroke={D} /><rect x="24" y="20" width="19" height="20" rx="2" fill={B} /><path d="M28 26H39M28 31H39M28 36H39" stroke="#fff" strokeWidth="1.5" /></svg>
        </div>
      </div>
    </div>
  );
}

function Scene() {
  const ribsG = Array.from({ length: 15 }, (_, i) => i);
  const ribsR = Array.from({ length: 15 }, (_, i) => i);
  const green = "#54ba30";
  const band = "#79bd6e";
  return (
    <svg viewBox="380 394 2288 1489" width="2288" height="1489" className="absolute inset-0">
      <defs>
        <clipPath id="grayroof"><polygon points="1355,1363 1800,990 2300,1000 2374,1539" /></clipPath>
        <clipPath id="greenroof"><polygon points="858,952 1431,987 1289,1350 676,1244" /></clipPath>
      </defs>
      {/* gray roof */}
      <polygon points="1355,1363 1800,990 2300,1000 2374,1539" fill="#9c9c9c" stroke="#222" strokeWidth="1" />
      <polygon points="2280,1420 2348,1400 2374,1539" fill="#666" stroke="#222" strokeWidth="1" />
      <g clipPath="url(#grayroof)">
        {ribsR.map((i) => (
          <line key={i} x1={1420 + i * 70} y1={1380 + i * 12} x2={1540 + i * 66} y2={1380 + i * 12 - 400} stroke="#757575" strokeWidth="1.5" />
        ))}
      </g>
      <polygon points="1355,1363 2374,1539 2374,1544 1355,1369" fill="#827c6e" stroke="#222" strokeWidth="1" />
      <polygon points="1355,1369 2374,1544 2374,1553 1355,1380" fill="#ece63e" />
      <polygon points="1355,1380 2374,1553 2372,1562 1355,1387" fill="#8b7d66" stroke="#222" strokeWidth="1" />
      <polygon points="1355,1387 2372,1562 2367,1592 1355,1409" fill="#b5a679" />
      <polygon points="1355,1409 2367,1592 2366,1600 1355,1414" fill="#8b7d66" stroke="#222" strokeWidth="1" />
      <polygon points="1355,1414 2366,1600 2364,1607 1355,1418" fill="#fff" stroke="#222" strokeWidth="1" />

      {/* green roof, gable end */}
      <polygon points="1434,1041 1533,1205 1370,1190" fill="#c2d8c0" />
      <polygon points="1365,1180 1535,1205 1542,1229 1360,1205" fill="#b3d3ae" opacity=".85" />
      <polyline points="1360,1202 1542,1229" stroke={green} strokeWidth="4" fill="none" />
      <polygon points="1431,987 1541,1195 1542,1229 1533,1205 1434,1041" fill={green} />
      <polygon points="1433,1014 1537,1205 1534,1202 1434,1030" fill="#a9a37c" />
      <line x1="1451" y1="1175" x2="1370" y2="1166" stroke="#0000ee" strokeWidth="6" />
      <line x1="1451" y1="1175" x2="1362" y2="1231" stroke="#0000ee" strokeWidth="8" />

      {/* slope */}
      <polygon points="858,952 1431,987 1289,1350 676,1244" fill="#95ab92" />
      <g clipPath="url(#greenroof)">
        {ribsG.map((i) => (
          <line key={i} x1={771 + i * 37} y1={1264 + i * 6.2} x2={911 + i * 34} y2={958 + i * 2} stroke="#7a8e77" strokeWidth="1.2" />
        ))}
        <polyline points="860,962 1042,1146 1370,1182" stroke={band} strokeWidth="13" fill="none" opacity=".45" />
        <polyline points="862,990 1042,1165 1370,1200" stroke={band} strokeWidth="6" fill="none" opacity=".45" />
        <polyline points="860,966 700,1250" stroke={band} strokeWidth="8" fill="none" opacity=".5" />
        <polyline points="866,995 722,1250" stroke={band} strokeWidth="5" fill="none" opacity=".5" />
        <polyline points="870,992 1400,1034" stroke={band} strokeWidth="4" fill="none" opacity=".45" />
        <polyline points="860,966 1425,1002" stroke={band} strokeWidth="10" fill="none" opacity=".55" />
      </g>

      {/* fascia */}
      <polygon points="676,1244 1289,1350 1292,1404 681,1290" fill={green} />
      <polygon points="679,1264 1290,1369 1292,1392 681,1285" fill="#b5b27f" />
      <line x1="677" y1="1252" x2="1289" y2="1358" stroke="#efe93c" strokeWidth="3" />
      <polyline points="676,1244 858,952 1431,987" stroke={green} strokeWidth="5" fill="none" />
      <polygon points="1289,1350 1431,987 1434,1000 1296,1404 1292,1404" fill={green} />
      <polygon points="1299,1362 1431,1022 1433,1040 1298,1396" fill="#a9a37c" />

      {/* base outline */}
      <polyline points="1370,1166 1042,1129 791,1205 1260,1276 1362,1231" stroke="#5565b5" strokeWidth="6" fill="none" />
      <circle cx="1042" cy="1129" r="7" fill="#555" />
      <circle cx="791" cy="1205" r="6" fill="#777" />
      <circle cx="1260" cy="1276" r="6" fill="#777" />

      {/* axis */}
      <polyline points="1055,1265 1060,1338 1118,1342" stroke="#bbc4c1" strokeWidth="4" fill="none" />
      <line x1="1060" y1="1338" x2="1110" y2="1305" stroke="#9dbb9b" strokeWidth="8" opacity=".7" />
      <text x="1053" y="1255" fontSize="22" fill="#111" fontFamily="Liberation Sans, sans-serif">z</text>
      <text x="1117" y="1313" fontSize="22" fill="#111" fontFamily="Liberation Sans, sans-serif">y</text>
      <text x="1131" y="1350" fontSize="22" fill="#111" fontFamily="Liberation Sans, sans-serif">x</text>

      {[[858, 952], [1431, 987], [676, 1244], [1289, 1350], [1540, 1190], [1451, 1175]].map(([x, y]) => (
        <circle key={x} cx={x} cy={y} r="7" fill="#000" />
      ))}
    </svg>
  );
}

function Annotations() {
  const pink = "#ee58ee";
  return (
    <svg viewBox="380 394 2288 1489" width="2288" height="1489" className="absolute inset-0 pointer-events-none z-20">
      <defs>
        <filter id="rough" x="-5%" y="-5%" width="110%" height="110%">
          <feTurbulence type="fractalNoise" baseFrequency="0.3" numOctaves="2" seed="4" />
          <feDisplacementMap in="SourceGraphic" scale="6" />
        </filter>
      </defs>
      <g filter="url(#rough)" fill="none" stroke={pink} strokeWidth="8">
        <rect x="1369" y="601" width="77" height="78" />
        <rect x="1625" y="638" width="882" height="794" />
        <rect x="2068" y="739" width="405" height="64" />
        <line x1="1398" y1="1190" x2="1419" y2="735" strokeWidth="9" />
        <line x1="1467" y1="642" x2="2020" y2="762" strokeWidth="9" />
        <polygon points="1398,740 1440,740 1419,710" fill={pink} />
        <polygon points="2040,767 2016,738 2003,783" fill={pink} />
      </g>
    </svg>
  );
}

const Handle = ({ className }: { className: string }) => <div className={`absolute bg-[#ececec] ${className}`} />;

function Canvas() {
  return (
    <div className="relative h-[1489px] bg-white shrink-0">
      <Scene />
      <Palette />
      <Dialog />
      <Annotations />
      <Handle className="left-[1115px] top-0 w-[62px] h-[32px] rounded-b-[8px] flex items-center justify-center" />
      <div className="absolute left-[1123px] top-[15px] w-[46px] border-t-[3px] border-dashed border-[#ee8a3a]" />
      <Handle className="left-[1114px] bottom-0 w-[63px] h-[32px] rounded-t-[8px]" />
      <div className="absolute left-[1122px] bottom-[15px] w-[48px] border-t-[3px] border-dashed border-[#ee8a3a]" />
      <Handle className="left-[5px] top-[716px] w-[28px] h-[60px] rounded-r-[8px]" />
      <div className="absolute left-[18px] top-[724px] h-[44px] border-l-[3px] border-dashed border-[#b5b5b5]" />
      <Handle className="right-0 top-[716px] w-[28px] h-[60px] rounded-l-[8px]" />
      <div className="absolute right-[13px] top-[724px] h-[44px] border-l-[3px] border-dashed border-[#ee8a3a]" />
    </div>
  );
}

const ST: Record<string, Part[]> = {
  a: [s("M26 32a14 16 0 1 0-10-5M4 20H22M10 14L4 20L10 26M28 30L36 40")],
  b: [s("M26 32a14 16 0 1 0-10-5M8 20H30M24 14L30 20L24 26M28 30L36 40", "#a0a0a0")],
  c: [s("M18 4a14 16 0 1 0 .1 0M18 13V27M11 20H25M26 32L34 40")],
  d: [s("M20 4a12 12 0 1 0 6 22M26 20V30H16")],
  e: [s("M20 4a3 3 0 1 0 .1 0M20 11V24L14 36M20 24L26 36M13 20L20 12L27 20")],
  f: [s("M18 3a15 18 0 1 0 .1 0M26 33L34 42M18 8V14M18 26V32M8 20H12M24 20H28M15 11L18 8L21 11M15 29L18 32L21 29")],
  g: [s("M18 4L8 16L18 28L28 16ZM26 22V36M22 28L26 22L30 28M20 36L26 36", "#a5a5a5")],
  h: [s("M4 10H36V30H4ZM10 30V22M16 30V24M22 30V22M28 30V24")],
  i: [s("M10 14H34L28 4H16ZM6 24H28L34 14M4 36H26L34 24M4 36L10 14M6 24L4 36")],
  j: [s("M6 6H34V36H6Z"), s("M6 6H34V11H6ZM6 31H34V36H6Z", D, D), s("M10 26L20 14M18 26L28 14M26 26L34 17M6 14H34")],
  k: [s("M10 2V24L20 38L30 24V2M10 24H30")],
  l: [s("M4 8H36V32H4ZM4 8V14H36V8M10 22H30")],
  m: [s("M4 12H22V36H4ZM14 12V4H32L36 10M22 20H36V36H22")],
  n: [s("M20 2L8 20V36H26M20 2L30 18M14 36V26H24V36M30 24V36")],
  o: [s("M4 36L10 14L30 4L36 36ZM10 24L30 14M4 30L30 24M16 2L4 12")],
  p: [s("M20 4L6 14V30L20 38L34 30V14ZM20 4V22M6 14L20 22L34 14M20 22V38")],
};

function StIc({ n }: { n: string }) {
  return (
    <svg width="34" height="34" viewBox="0 0 40 42" fill="none" strokeWidth="2.2" strokeLinejoin="round" className="shrink-0">
      {ST[n].map((p, i) => <path key={i} d={p.d} stroke={p.c} fill={p.f} />)}
    </svg>
  );
}

function StatusCell({ ic, t, off, w = "w-[186px]" }: { ic: string; t: string; off?: boolean; w?: string }) {
  return (
    <div className={`${w} shrink-0 flex items-center border-r-[2px] border-[#d2d2d2] ${off ? "text-[#b3b3b3]" : "text-[#1c1f22]"}`}>
      <span className="ml-[8px] w-[40px] flex justify-center shrink-0"><StIc n={ic} /></span>
      <span className="ml-[14px] whitespace-nowrap">{t}</span>
      <span className="ml-auto mr-[14px]"><ChevR c={off ? "#bcbcbc" : "#222"} /></span>
    </div>
  );
}

function StatusBar() {
  return (
    <div className="h-[37px] bg-[#ebebeb] flex text-[21px] shrink-0">
      <div className="w-[145px] shrink-0 flex items-center pl-[6px] gap-[11px] border-r-[2px] border-[#d2d2d2]"><StIc n="a" /><StIc n="b" /><StIc n="c" /></div>
      <div className="w-[102px] shrink-0 flex items-center pl-[10px] gap-[11px] border-r-[2px] border-[#d2d2d2]"><StIc n="d" /><StIc n="e" /></div>
      <StatusCell ic="f" t="keine D..." off w="w-[188px]" />
      <StatusCell ic="g" t="keine D..." off />
      <div className="w-[186px] shrink-0 flex items-center border-r-[2px] border-[#d2d2d2] text-[#1c1f22]">
        <span className="ml-[8px] w-[40px] flex justify-center"><StIc n="h" /></span>
        <span className="ml-[32px]">1:100</span>
        <span className="ml-auto mr-[18px]"><ChevR /></span>
      </div>
      <StatusCell ic="i" t="00 Arb..." />
      <StatusCell ic="j" t="Komple..." />
      <StatusCell ic="k" t="04 S/W..." />
      <StatusCell ic="l" t="00 Arb..." />
      <StatusCell ic="m" t="Keine..." />
      <StatusCell ic="n" t="00 Rein..." />
      <StatusCell ic="o" t="Nur Ha..." />
      <div className="flex-1 flex items-center text-[#1c1f22]">
        <span className="ml-[8px] w-[40px] flex justify-center"><StIc n="p" /></span>
        <span className="ml-[14px] whitespace-nowrap">Schatti...</span>
        <span className="ml-auto mr-[8px]"><ChevR /></span>
      </div>
    </div>
  );
}

export default function App() {
  return (
    <div className="w-[3390px] h-[2054px] bg-white pl-[68px] pt-[52px] overflow-hidden font-['Inter',sans-serif]">
      <div className="w-[3255px] h-[1918px] rounded-[22px] bg-[#e6e6e6] shadow-[0_0_2px_#8c8c8c,0_18px_60px_rgba(0,0,0,.22)] flex flex-col overflow-hidden">
        <div className="h-[56px] bg-[#e4e4e2] border-b-[2px] border-[#cfcfcd] flex items-center shrink-0">
          <div className="ml-[16px] w-[24px] h-[24px] rounded-full bg-[#cbcbc9] border border-[#b8b8b6]" />
          <div className="ml-[16px] w-[24px] h-[24px] rounded-full bg-[#cbcbc9] border border-[#b8b8b6]" />
          <div className="ml-[16px] w-[24px] h-[24px] rounded-full bg-[#cbcbc9] border border-[#b8b8b6]" />
          <svg width="18" height="30" viewBox="0 0 18 30" fill="none" stroke="#d0d0d0" strokeWidth="2" className="ml-[1422px]"><path d="M2 8L9 2L16 8V28H2Z" /></svg>
          <span className="ml-[18px] text-[26px] font-bold text-[#a6a6a6]">Ohne Titel</span>
        </div>
        <div className="shrink-0">
          <Toolbar1 />
          <Toolbar2 />
          <InfoBar />
        </div>
        <div className="flex h-[1570px] shrink-0">
          <LeftPanel />
          <div className="w-[2288px] shrink-0 flex flex-col text-[21px] text-[#3a3d40]">
            <div className="h-[44px] flex shrink-0">
              <div className="w-[68px] bg-[#ebebeb] border-r-[2px] border-[#d2d2d2] flex items-center justify-center">
                <svg width="36" height="30" viewBox="0 0 36 30" fill="none" stroke={D} strokeWidth="2"><rect x="2" y="2" width="14" height="11" /><rect x="21" y="2" width="14" height="11" /><rect x="2" y="17" width="14" height="11" /><rect x="21" y="17" width="14" height="11" /></svg>
              </div>
              <div className="w-[600px] bg-[#ebebeb] flex items-center justify-center gap-[6px] pr-[8px]">
                <svg width="36" height="30" viewBox="0 0 36 30" fill="none" stroke={B} strokeWidth="2.2"><path d="M1 2H15V13H35V28H1ZM6 2V9L12 4" /></svg>
                <span>0. EG [0. EG]</span>
              </div>
              <div className="w-[599px] bg-white flex items-center justify-center gap-[8px]">
                <svg width="30" height="32" viewBox="0 0 30 32" fill="none" stroke={D} strokeWidth="2"><path d="M1 5L20 1L26 3V26L20 31L1 26ZM20 1V31" /></svg>
                <span>[3D / Alle]</span>
              </div>
              <div className="flex-1 bg-[#e1e1e1]" />
              <div className="w-[100px] bg-white flex items-center justify-center gap-[6px]">
                <Ic n="tabh" w={36} h={36} /><ChevD />
              </div>
            </div>
            <Canvas />
            <StatusBar />
          </div>
          <RightPanel />
        </div>
        <div className="h-[50px] bg-[#ebebeb] flex items-center justify-end shrink-0 shadow-[inset_0_2px_0_#e3e3e3]">
          <svg width="36" height="32" viewBox="0 0 36 32" fill="none" strokeWidth="2.2"><path d="M2 24V4H26M8 30V10H30V14" stroke={D} /><path d="M18 20C20 14 28 14 32 18M34 12V19H27M32 24C30 30 22 30 18 26M16 32V25H23" stroke={B} /></svg>
          <div className="ml-[20px] w-[2px] h-[30px] bg-[#a8a8a8]" />
          <span className="ml-[24px] text-[27px] tracking-[-0.5px] font-['Lato',sans-serif] text-[#2b3339] [-webkit-text-stroke:0.5px_#2b3339]">GRAPHISOFT</span>
          <span className="ml-[10px] mr-[25px] text-[28px] font-['Lato',sans-serif] font-light text-[#2b3339]">ID</span>
        </div>
      </div>
    </div>
  );
}
